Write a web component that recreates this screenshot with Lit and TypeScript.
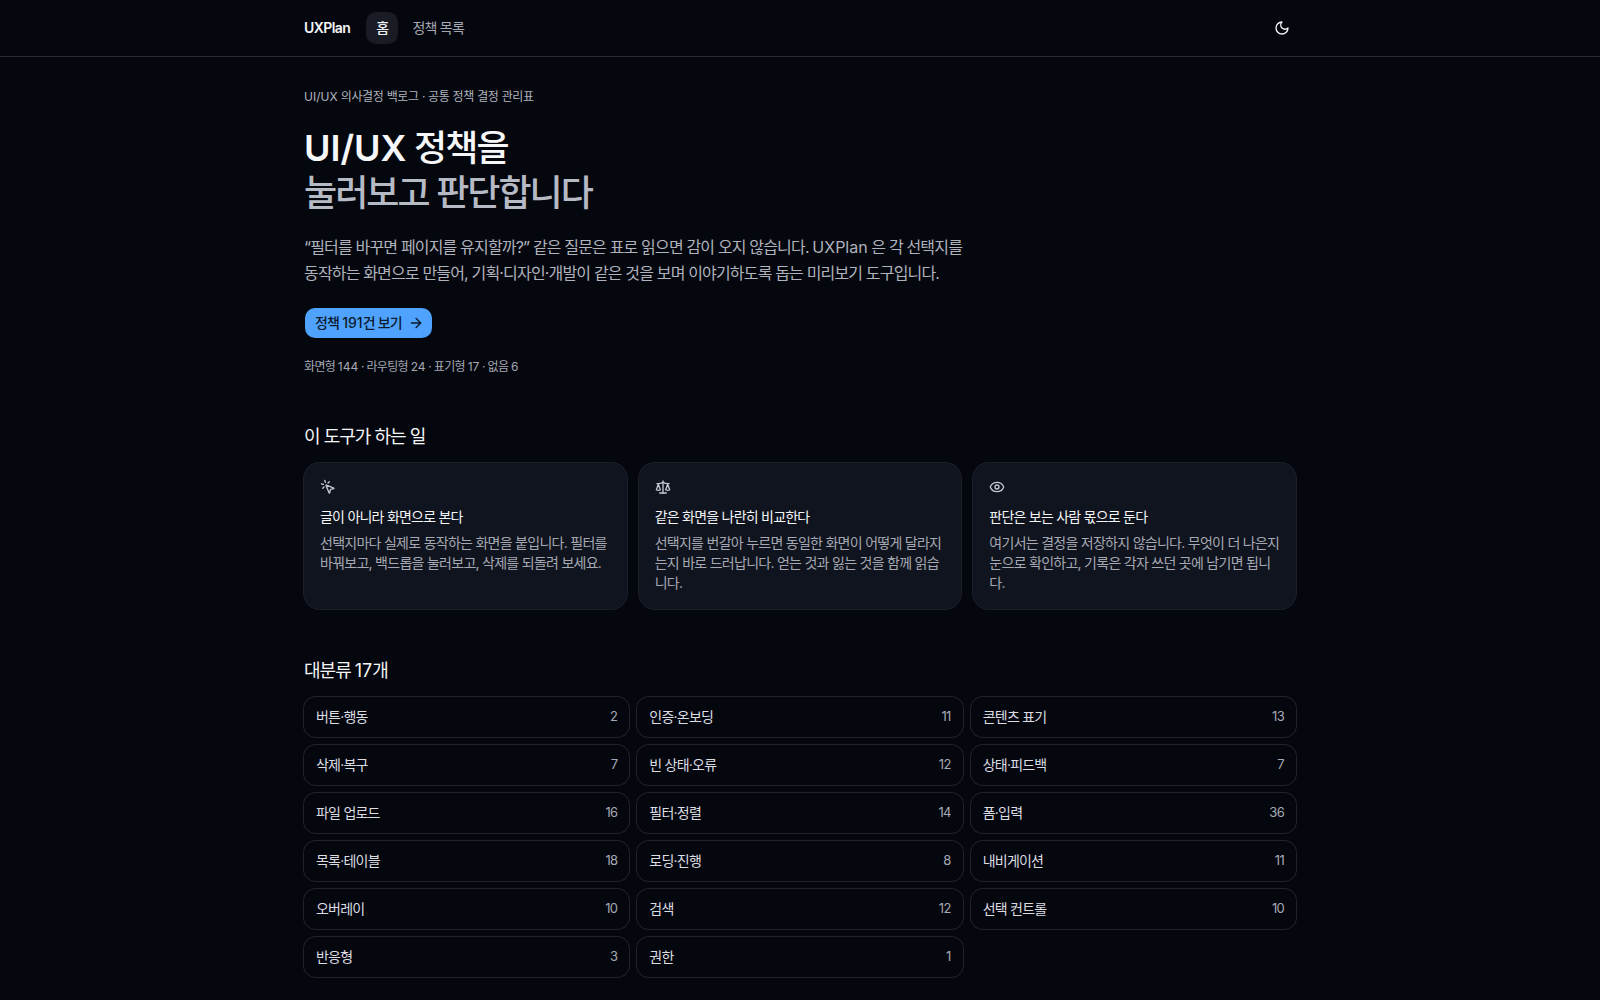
import { LitElement, html, css, svg } from "lit";
import { customElement } from "lit/decorators.js";

const icon = (body: unknown, size = 16) => html`<svg class="ic" width=${size} height=${size} viewBox="0 0 24 24" fill="none" stroke="currentColor" stroke-width="2" stroke-linecap="round" stroke-linejoin="round">${body}</svg>`;

/* Hangul runs are set tighter than the Latin ones, so Latin runs cancel the spacing. */
const t = (text: string) =>
  text.split(/([A-Za-z0-9/]+)/).map((p, i) => (i % 2 ? html`<span class="la">${p}</span>` : p));

const moon = svg`<path d="M12 3a6 6 0 0 0 9 9 9 9 0 1 1-9-9Z"/>`;
const arrow = svg`<path d="M5 12h14"/><path d="m12 5 7 7-7 7"/>`;
const click = svg`<path d="M14 4.1 12 6"/><path d="m5.1 8-2.9-.8"/><path d="m6 12-1.9 2"/><path d="M7.2 2.2 8 5.1"/><path d="M9.037 9.69a.498.498 0 0 1 .653-.653l11 4.5a.5.5 0 0 1-.074.949l-4.349 1.041a1 1 0 0 0-.74.739l-1.04 4.35a.5.5 0 0 1-.95.074z"/>`;
const scale = svg`<path d="m16 16 3-8 3 8c-.87.65-1.92 1-3 1s-2.13-.35-3-1Z"/><path d="m2 16 3-8 3 8c-.87.65-1.92 1-3 1s-2.13-.35-3-1Z"/><path d="M7 21h10"/><path d="M12 3v18"/><path d="M3 7h2c2 0 5-1 7-2 2 1 5 2 7 2h2"/>`;
const eye = svg`<path d="M2.062 12.348a1 1 0 0 1 0-.696 10.75 10.75 0 0 1 19.876 0 1 1 0 0 1 0 .696 10.75 10.75 0 0 1-19.876 0"/><circle cx="12" cy="12" r="3"/>`;

const features = [
  { i: click, t: "글이 아니라 화면으로 본다", d: "선택지마다 실제로 동작하는 화면을 붙입니다. 필터를 바꿔보고, 백드롭을 눌러보고, 삭제를 되돌려 보세요." },
  { i: scale, t: "같은 화면을 나란히 비교한다", d: "선택지를 번갈아 누르면 동일한 화면이 어떻게 달라지는지 바로 드러납니다. 얻는 것과 잃는 것을 함께 읽습니다." },
  { i: eye, t: "판단은 보는 사람 몫으로 둔다", d: "여기서는 결정을 저장하지 않습니다. 무엇이 더 나은지 눈으로 확인하고, 기록은 각자 쓰던 곳에 남기면 됩니다." },
];

const cats: [string, number][] = [
  ["버튼·행동", 2], ["인증·온보딩", 11], ["콘텐츠 표기", 13],
  ["삭제·복구", 7], ["빈 상태·오류", 12], ["상태·피드백", 7],
  ["파일 업로드", 16], ["필터·정렬", 14], ["폼·입력", 36],
  ["목록·테이블", 18], ["로딩·진행", 8], ["내비게이션", 11],
  ["오버레이", 10], ["검색", 12], ["선택 컨트롤", 10],
  ["반응형", 3], ["권한", 1],
];

@customElement("app-root")
export class AppRoot extends LitElement {
  static styles = css`
    :host {
      display: block;
      min-height: 100vh;
      background: #05070f;
      color: #f4f5f7;
      font-family: Inter, "Noto Sans CJK KR", sans-serif;
      font-size: 14px;
    }
    * { box-sizing: border-box; letter-spacing: -0.055em; }
    .la { letter-spacing: 0; }
    .ic { display: block; flex: none; }
    header { border-bottom: 1px solid #2a2c33; }
    .bar {
      max-width: 1024px; margin: 0 auto; padding: 0 16px; height: 56px;
      display: flex; align-items: center; justify-content: space-between;
    }
    .left { display: flex; align-items: center; gap: 16px; }
    .logo { font-weight: 600; font-size: 14px; color: #f4f5f7; letter-spacing: -0.04em; line-height: 20px; }
    nav { display: flex; gap: 4px; }
    .nav { height: 32px; padding: 0 10px 2px; border-radius: 10px; display: flex; align-items: center; color: #a6a9b3; font-size: 14px; }
    .nav.on { background: #191c25; color: #eceef1; font-weight: 500; }
    .theme { width: 32px; height: 32px; margin-right: -2px; display: flex; align-items: center; justify-content: center; color: #f4f5f7; }
    main { max-width: 1024px; margin: 0 auto; padding: 32px 16px 0; }
    .eyebrow { font-size: 12px; line-height: 16px; color: #b0b3bc; margin: 0; letter-spacing: -0.026em; }
    h1 { margin: 21px 0 0; font-size: 36px; line-height: 45px; font-weight: 500; color: #f6f7f9; }
    h1 .la { font-weight: 600; }
    h1 .sub { display: block; color: #b6bac4; font-weight: 500; }
    .lead { margin: 18px 0 0; max-width: 672px; font-size: 16px; line-height: 26px; color: #b0b3bc; letter-spacing: -0.052em; }
    .cta {
      margin: 22px 0 0 1px; height: 30px; padding: 0 8px 0 10px; border-radius: 10px; background: #4fa3ff; color: #0b1a2e;
      display: inline-flex; align-items: center; gap: 6px; font-size: 14px; font-weight: 500;
    }
    .cta span:first-child { padding-bottom: 2px; }
    .meta { margin: 21px 0 0; font-size: 12px; line-height: 16px; color: #a6a9b3; }
    h2 { margin: 0; font-size: 18px; line-height: 28px; font-weight: 400; color: #f4f5f7; }
    .s1 { margin-top: 48px; }
    .s2 { margin-top: 48px; }
    .features { margin-top: 12px; display: grid; grid-template-columns: repeat(3, 1fr); gap: 12px; }
    .feature {
      background: #10141e; border-radius: 16px; padding: 16px; box-shadow: 0 0 0 1px #1c1f29;
    }
    .feature .ic { color: #c4c7cf; }
    .feature h3 { margin: 12px 0 0; font-size: 14px; line-height: 20px; font-weight: 400; color: #f4f5f7; }
    .feature p { margin: 6px 0 0; font-size: 14px; line-height: 20px; color: #a6a9b3; letter-spacing: -0.052em; }
    .cats { margin-top: 12px; display: grid; grid-template-columns: repeat(3, 1fr); gap: 8px; }
    .cat {
      height: 40px; padding: 0 12px 2px; border-radius: 12px; box-shadow: 0 0 0 1px #20232c;
      display: flex; align-items: center; justify-content: space-between; font-size: 14px; color: #dcdde2;
    }
    .cat b { font-weight: 400; font-size: 13px; color: #a6a9b3; }
  `;

  render() {
    return html`
      <header>
        <div class="bar">
          <div class="left">
            <span class="logo">UXPlan</span>
            <nav><span class="nav on">홈</span><span class="nav">정책 목록</span></nav>
          </div>
          <span class="theme">${icon(moon)}</span>
        </div>
      </header>
      <main>
        <p class="eyebrow">${t("UI/UX 의사결정 백로그 · 공통 정책 결정 관리표")}</p>
        <h1>${t("UI/UX 정책을")}<span class="sub">눌러보고 판단합니다</span></h1>
        <p class="lead">${t("“필터를 바꾸면 페이지를 유지할까?” 같은 질문은 표로 읽으면 감이 오지 않습니다. UXPlan 은 각 선택지를 동작하는 화면으로 만들어, 기획·디자인·개발이 같은 것을 보며 이야기하도록 돕는 미리보기 도구입니다.")}</p>
        <div><div class="cta"><span>${t("정책 191건 보기")}</span>${icon(arrow)}</div></div>
        <p class="meta">${t("화면형 144 · 라우팅형 24 · 표기형 17 · 없음 6")}</p>
        <section class="s1">
          <h2>이 도구가 하는 일</h2>
          <div class="features">
            ${features.map((f) => html`<div class="feature">${icon(f.i)}<h3>${f.t}</h3><p>${f.d}</p></div>`)}
          </div>
        </section>
        <section class="s2">
          <h2>${t("대분류 17개")}</h2>
          <div class="cats">
            ${cats.map(([n, c]) => html`<div class="cat"><span>${n}</span><b>${c}</b></div>`)}
          </div>
        </section>
      </main>
    `;
  }
}
